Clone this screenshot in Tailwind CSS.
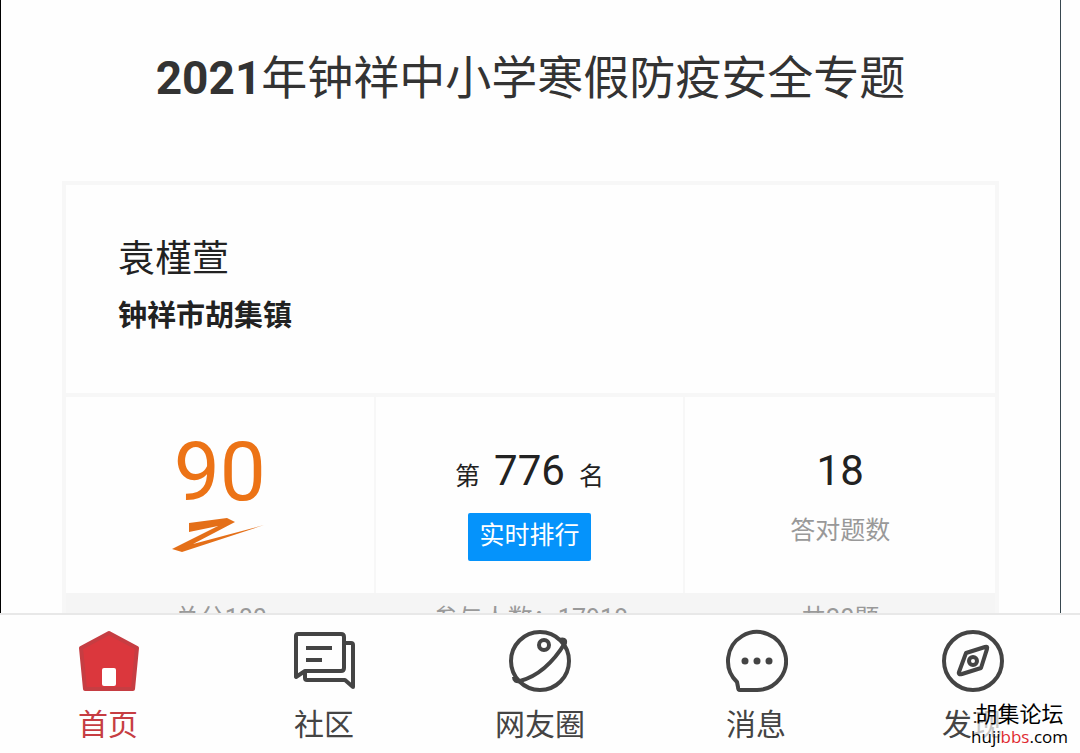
<!DOCTYPE html>
<html lang="zh-CN">
<head>
<meta charset="utf-8">
<meta name="viewport" content="width=device-width, initial-scale=1">
<title>2021年钟祥中小学寒假防疫安全专题</title>
<script src="https://cdn.jsdelivr.net/npm/@tailwindcss/browser@4"></script>
</head>
<body class="flex h-screen flex-col bg-[#fefefe] font-['Roboto','Noto_Sans_CJK_SC',sans-serif] text-[#222]">
  <main class="mr-[19px] min-h-0 flex-1 overflow-hidden border-x border-l-black border-r-[#37474f] px-[61px]">
    <h1 class="pt-[46px] text-center text-[46px] leading-[64px] text-[#333]"><b>2021</b>年钟祥中小学寒假防疫安全专题</h1>

    <section class="mt-[71px] border-4 border-b-0 border-[#f7f7f7] bg-[#f5f5f5]">
      <header class="border-b-4 border-[#f7f7f7] bg-[#fefefe] px-[52px] pt-[49px] pb-[53px]">
        <h2 class="text-[37px] leading-[52px]">袁槿萱</h2>
        <p class="pt-[6px] text-[29px] leading-[48px] font-bold">钟祥市胡集镇</p>
      </header>
      <div class="grid grid-cols-3 divide-x-2 divide-[#f7f7f7] bg-[#fefefe] text-center">
        <div class="flex h-[196px] flex-col items-center pt-[34px]">
          <strong class="text-[82px] leading-[82px] font-normal text-[#ec7316]">90</strong>
          <svg class="mt-1 h-9 w-24" viewBox="0 0 96 36" fill="#e46f18" aria-hidden="true">
            <path d="M17 6 55 1 63 5 21 27 92 8 10 35 0 32 46 9 17 15Z"/>
          </svg>
        </div>
        <div class="flex flex-col items-center pt-11">
          <p class="flex h-[60px] items-baseline gap-[14px] text-[25px] leading-[60px]"><span>第</span><span class="text-[42px]">776</span><span>名</span></p>
          <button type="button" class="mt-3 rounded-[2px] bg-[#0593fb] px-[11px] pb-[2px] text-[25px] leading-[46px] text-white">实时排行</button>
        </div>
        <div class="pt-11">
          <p class="text-[42px] leading-[60px]">18</p>
          <p class="pt-2 text-[25px] leading-[44px] text-[#999]">答对题数</p>
        </div>
      </div>
      <div class="grid grid-cols-3 pt-2 text-center text-[25px] leading-9 text-[#999]">
        <p>总分100</p>
        <p>参与人数：17918</p>
        <p>共20题</p>
      </div>
    </section>
  </main>

  <nav class="relative grid grid-cols-5 border-t-2 border-[#e8e8e8] bg-[#fefefe] pt-[14px] pb-[6px] text-[30px] leading-[44px] text-[#444]">
    <a href="#" class="flex flex-col items-center gap-[10px] text-[#c63d42]">
      <svg class="size-16" viewBox="0 0 64 64" aria-hidden="true">
        <path d="M33 4 61 19 57 60H9L5 19Z" fill="#db373d" stroke="#c63d42" stroke-width="4" stroke-linejoin="round"/>
        <rect x="26" y="39" width="14" height="18" rx="2" fill="#fff"/>
      </svg>
      <span>首页</span>
    </a>
    <a href="#" class="flex flex-col items-center gap-[10px]">
      <svg class="size-16" viewBox="0 0 64 64" fill="none" stroke="currentColor" stroke-width="4" stroke-linejoin="round" aria-hidden="true">
        <path d="M6 5H49Q52 5 52 8V39Q52 42 49 42H13L4 48V7Q4 5 6 5Z"/>
        <path d="M52 14H59Q61 14 61 16V58L53 51H15Q13 51 13 49V43"/>
        <path d="M14 19H40M14 31H30"/>
      </svg>
      <span>社区</span>
    </a>
    <a href="#" class="flex flex-col items-center gap-[10px]">
      <svg class="size-16" viewBox="0 0 64 64" fill="none" stroke="currentColor" stroke-width="4" stroke-linejoin="round" aria-hidden="true">
        <circle cx="32" cy="32" r="29"/>
        <circle cx="36" cy="16" r="5"/>
        <path d="M51 11Q58 9 57 14Q38 45 12 52Q6 53 6 48"/>
      </svg>
      <span>网友圈</span>
    </a>
    <a href="#" class="flex flex-col items-center gap-[10px]">
      <svg class="size-16" viewBox="0 0 64 64" fill="none" stroke="currentColor" stroke-width="4" stroke-linejoin="round" aria-hidden="true">
        <path d="M33 61H16Q14 61 14 58L13 53A29 29 0 1 1 33 61Z"/>
        <g fill="currentColor" stroke="none"><circle cx="21" cy="32" r="3.5"/><circle cx="33" cy="32" r="3.5"/><circle cx="45" cy="32" r="3.5"/></g>
      </svg>
      <span>消息</span>
    </a>
    <a href="#" class="flex flex-col items-center gap-[10px]">
      <svg class="size-16" viewBox="0 0 64 64" fill="none" stroke="currentColor" stroke-width="4" stroke-linejoin="round" aria-hidden="true">
        <circle cx="33" cy="32" r="29"/>
        <path d="M26 24 45 18Q48 17 47 20L41 39 22 45Q18 46 19 43Z"/>
        <circle cx="33" cy="32" r="4"/>
      </svg>
      <span>发现</span>
    </a>
    <div class="absolute right-3 bottom-1 flex flex-col items-center font-['Open_Sans','Noto_Sans_CJK_SC',sans-serif] text-[17px] leading-6 text-black">
      <span class="bg-[#fefefe]/70 text-[22px]">胡集论坛</span>
      <span class="bg-[#fefefe]/70">huji<span class="text-[#e02a30]">bbs</span>.com</span>
    </div>
  </nav>
</body>
</html>
